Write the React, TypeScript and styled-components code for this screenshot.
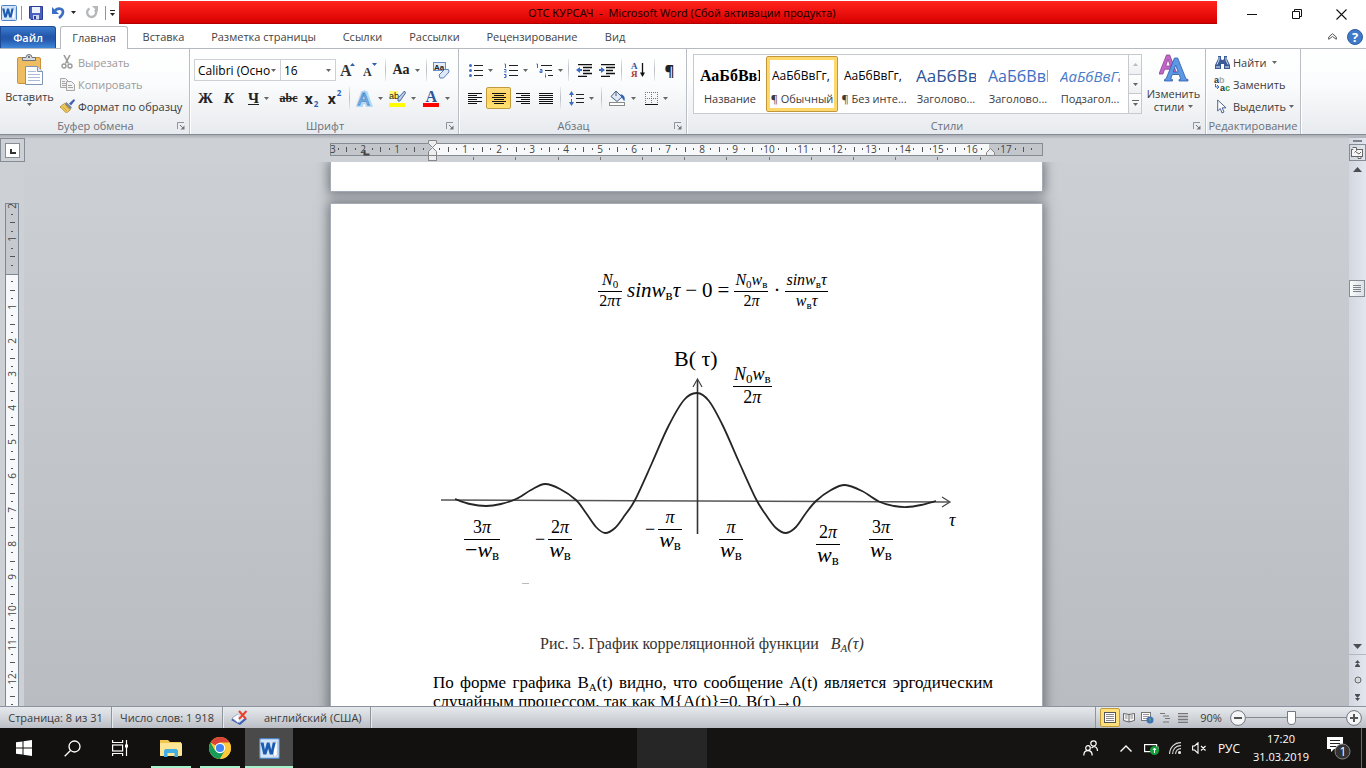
import React from 'react';
import styled, { createGlobalStyle, css } from 'styled-components';

const uiFont = '"Open Sans", "Noto Sans", sans-serif';
const serif = '"Liberation Serif", serif';

const GlobalStyle = createGlobalStyle`
  *, *::before, *::after { box-sizing: border-box; }
  body { margin: 0; font-family: ${uiFont}; font-size: 11px; color: #3b3b3b; overflow: hidden; }
  button, select, input { font: inherit; color: inherit; margin: 0; }
  button { border: 0; padding: 0; background: none; cursor: default; white-space: nowrap; }
  svg { display: block; flex: none; }
`;

/* ---------- window frame ---------- */

const Shell = styled.div`
  display: flex;
  flex-direction: column;
  height: 100vh;
`;

const TitleBar = styled.header`
  display: flex;
  height: 25px;
  background: #fff;
`;

const QuickAccess = styled.div`
  display: flex;
  align-items: center;
  width: 119px;
  padding-left: 1px;
  gap: 4px;
`;

const QuickButton = styled.button<{ $w?: number }>`
  display: flex;
  align-items: center;
  justify-content: center;
  width: ${p => p.$w ?? 16}px;
  height: 22px;
`;

const QuickRule = styled.span`
  width: 1px;
  height: 14px;
  background: #8f959c;
`;

const Caption = styled.h1`
  flex: 1;
  margin: 1px 0;
  padding-left: 28px;
  font-family: "Noto Sans", sans-serif;
  font-size: 11px;
  line-height: 23px;
  font-weight: 400;
  text-align: center;
  white-space: pre;
  color: #1c0000;
  background: linear-gradient(#ff261e, #f01410 45%, #d60000);
  border-bottom: 1px solid #b00000;
`;

const WindowButtons = styled.div`
  display: flex;
  justify-content: flex-end;
  width: 149px;
  padding: 3px 2px 0 0;
`;

const WindowButton = styled.button`
  display: flex;
  align-items: center;
  justify-content: center;
  width: 45px;
`;

/* ---------- tabs ---------- */

const TabRow = styled.nav`
  display: flex;
  align-items: stretch;
  height: 23px;
  background: #fff;
`;

const Tab = styled.button<{ $w: number; $active?: boolean }>`
  width: ${p => p.$w}px;
  margin-top: 1px;
  line-height: 22px;
  color: #444;
  ${p =>
    p.$active &&
    css`
      position: relative;
      margin-right: 1px;
      margin-bottom: -1px;
      border: 1px solid #b6babf;
      border-bottom: 0;
      border-radius: 3px 3px 0 0;
      background: #fff;
      line-height: 20px;
      z-index: 1;
    `}
`;

const FileTab = styled.button`
  width: 56px;
  margin: 1px 4px 0 0;
  line-height: 20px;
  color: #fff;
  font-weight: 600;
  border: 1px solid #1d4a93;
  border-bottom: 0;
  border-radius: 0 3px 0 0;
  background: linear-gradient(#3b7dd0, #2357aa 45%, #2459ad 60%, #3f86d8);
`;

const TabTools = styled.div`
  display: flex;
  align-items: center;
  gap: 10px;
  margin-left: auto;
  padding-right: 3px;
`;

/* ---------- ribbon ---------- */

const Ribbon = styled.section`
  display: flex;
  height: 87px;
  border-top: 1px solid #b6babf;
  border-bottom: 1px solid #858b93;
  background: linear-gradient(#fff, #fbfcfd 40%, #e7eaee);
`;

const Group = styled.section<{ $w: number }>`
  display: flex;
  flex-direction: column;
  width: ${p => p.$w}px;
  border-right: 1px solid #b9bec5;
  box-shadow: 1px 0 0 #fff;
`;

const GroupBody = styled.div`
  display: flex;
  flex: 1;
`;

const GroupFooter = styled.footer<{ $tight?: boolean }>`
  display: flex;
  align-items: center;
  height: 17px;
  padding: ${p => (p.$tight ? '0' : '0 4px 0 14px')};
  color: #6b7078;
`;

const GroupName = styled.span`
  flex: 1;
  text-align: center;
  white-space: nowrap;
`;

const BigButton = styled.button<{ $w: number }>`
  display: flex;
  flex: none;
  flex-direction: column;
  align-items: center;
  width: ${p => p.$w}px;
  padding-top: 5px;
  line-height: 13px;
`;

const BigLabel = styled.span`
  display: flex;
  align-items: center;
  gap: 4px;
  margin-top: 5px;
  & + & { margin-top: 0; }
`;

const CommandList = styled.div<{ $pad: number }>`
  display: flex;
  flex-direction: column;
  padding: 2px 0 0 ${p => p.$pad}px;
`;

const Command = styled.button<{ $off?: boolean }>`
  display: flex;
  align-items: center;
  gap: 3px;
  height: 22px;
  color: ${p => (p.$off ? '#9a9a9a' : '#3b3b3b')};
`;

const CommandIcon = styled.span`
  display: flex;
  width: 16px;
  justify-content: center;
`;

const ToolRows = styled.div`
  display: flex;
  flex-direction: column;
  gap: 6px;
  padding: 10px 0 0 4px;
`;

const ToolRow = styled.div`
  display: flex;
  align-items: center;
  height: 22px;
`;

const Tool = styled.button<{ $w?: number; $on?: boolean }>`
  display: flex;
  align-items: center;
  justify-content: center;
  gap: 5px;
  width: ${p => p.$w ?? 23}px;
  height: 22px;
  ${p =>
    p.$on &&
    css`
      border: 1px solid #c29b3d;
      border-radius: 2px;
      background: linear-gradient(#fddc7e, #ffd15c 50%, #ffe375);
    `}
`;

const Rule = styled.span`
  width: 1px;
  height: 22px;
  margin: 0 3px;
  background: linear-gradient(#e8eaed, #b9bec5, #e8eaed);
`;

const Letter = styled.span<{ $size?: number; $italic?: boolean; $line?: string; $sans?: boolean }>`
  font-family: ${p => (p.$sans ? uiFont : serif)};
  font-weight: 700;
  font-size: ${p => p.$size ?? 15}px;
  font-style: ${p => (p.$italic ? 'italic' : 'normal')};
  text-decoration: ${p => p.$line ?? 'none'};
  color: #222;
`;

const Power = styled.span<{ $up?: boolean }>`
  align-self: ${p => (p.$up ? 'flex-start' : 'flex-end')};
  margin-left: -4px;
  font-size: 8px;
  font-weight: 700;
  color: #2b5fb5;
`;

const Combo = styled.label<{ $w: number }>`
  display: flex;
  align-items: center;
  width: ${p => p.$w}px;
  height: 22px;
  padding-right: 4px;
  border: 1px solid #cdd1d6;
  background: #fff;
  & + & { border-left: 0; }
`;

const ComboField = styled.select`
  flex: 1;
  min-width: 0;
  appearance: none;
  border: 0;
  padding: 0 0 0 3px;
  background: none;
  color: #000;
  font-size: 12px;
`;

/* ---------- style gallery ---------- */

const Gallery = styled.div`
  display: flex;
  flex: 1;
  height: 60px;
  margin: 5px 0 0 6px;
  border: 1px solid #c6cacf;
  background: #fff;
`;

const StyleCard = styled.button<{ $on?: boolean }>`
  display: flex;
  flex-direction: column;
  align-items: center;
  justify-content: space-between;
  width: 72px;
  height: 56px;
  margin-top: 1px;
  padding: 8px 3px 4px;
  border: ${p => (p.$on ? '1px solid #c0973a' : '1px solid transparent')};
  border-radius: 2px;
  box-shadow: ${p => (p.$on ? 'inset 0 0 0 3px #ffd86b' : 'none')};
`;

const Sample = styled.span<{ $size: number; $color: string; $serif?: boolean; $italic?: boolean }>`
  width: 60px;
  height: 22px;
  overflow: hidden;
  text-align: left;
  line-height: 22px;
  font-family: ${p => (p.$serif ? serif : uiFont)};
  font-weight: ${p => (p.$serif ? 700 : 400)};
  font-style: ${p => (p.$italic ? 'italic' : 'normal')};
  font-size: ${p => p.$size}px;
  color: ${p => p.$color};
`;

const StyleName = styled.span`
  line-height: 16px;
`;

const GalleryScroll = styled.div`
  display: flex;
  flex-direction: column;
  width: 14px;
  margin: -1px -1px -1px auto;
`;

const GalleryStep = styled.button`
  display: flex;
  flex: 1;
  align-items: center;
  justify-content: center;
  border: 1px solid #c6cacf;
  background: linear-gradient(#fff, #eef0f3);
  & + & { border-top: 0; }
`;

/* ---------- workspace ---------- */

const Workspace = styled.main`
  display: grid;
  grid-template-columns: 24px minmax(0, 1fr) 17px;
  grid-template-rows: 27px minmax(0, 1fr);
  flex: 1;
  min-height: 0;
  background: linear-gradient(#cdd1d6, #c4c8cc 45%, #b9bcc0);
`;

const TabSelectorCell = styled.div`
  z-index: 1;
  padding-top: 3px;
  background: linear-gradient(#a8acb2, #cdd1d6 4px);
`;

const TabSelector = styled.button`
  display: flex;
  align-items: center;
  justify-content: center;
  width: 25px;
  height: 24px;
  border: 1px solid #868c94;
  background: #cdd1d6;
`;

const RulerCell = styled.div`
  display: flex;
  justify-content: center;
  padding-top: 3px;
  background: linear-gradient(#a8acb2, #cdd1d6 4px);
`;

const SideRuler = styled.div`
  overflow: hidden;
  background: #cdd1d6;
`;

const Viewport = styled.div`
  display: flex;
  flex-direction: column;
  align-items: center;
  gap: 11px;
  overflow: hidden;
`;

const Sheet = styled.article<{ $tail?: boolean }>`
  flex: none;
  width: 713px;
  height: ${p => (p.$tail ? 30 : 1006)}px;
  padding: ${p => (p.$tail ? '0' : '62px 49px 0 102px')};
  border: 1px solid #a6adb6;
  border-top-width: ${p => (p.$tail ? 0 : 1)}px;
  background: #fff;
  box-shadow: 0 0 11px 2px rgba(60, 64, 70, 0.6);
  font-family: ${serif};
  color: #000;
`;

const Equation = styled.div`
  display: flex;
  align-items: center;
  justify-content: center;
  height: 48px;
  gap: 5px;
  font-size: 21px;
  line-height: 20px;
`;

const Fraction = styled.span<{ $lh: number }>`
  display: inline-flex;
  flex-direction: column;
  align-items: center;
  line-height: ${p => p.$lh}px;
`;

const Numerator = styled.span<{ $size: number }>`
  padding: 0 1px 2px;
  font-size: ${p => p.$size}px;
`;

const Denominator = styled.span<{ $size: number }>`
  align-self: stretch;
  padding: 0 1px;
  text-align: center;
  border-top: 1px solid #000;
  font-size: ${p => p.$size}px;
`;

const Index = styled.sub<{ $size: number }>`
  font-size: ${p => p.$size}px;
  line-height: 0;
  vertical-align: -3px;
`;

const Figure = styled.figure`
  position: relative;
  margin: 26px 0 0;
  height: 260px;
`;

const Mark = styled.span<{ $x: number; $y: number; $size?: number }>`
  position: absolute;
  left: ${p => p.$x}px;
  top: ${p => p.$y}px;
  display: flex;
  align-items: center;
  gap: 3px;
  font-size: ${p => p.$size ?? 18}px;
  line-height: 20px;
  white-space: nowrap;
`;

const FigureTitle = styled.p`
  margin: 34px 0 0;
  padding-left: 107px;
  line-height: 20px;
  font-size: 16px;
  color: #333;
  white-space: pre;
`;

const BodyText = styled.p`
  margin: 19px 0 0;
  font-size: 17px;
  line-height: 19px;
  text-align: justify;
`;

/* ---------- vertical scroll bar ---------- */

const ScrollColumn = styled.aside`
  grid-column: 3;
  grid-row: 1 / 3;
  display: flex;
  flex-direction: column;
  align-items: stretch;
  border-top: 3px solid #b4b8be;
  background: linear-gradient(90deg, #d3d8e0, #e2e7ef);
`;

const ScrollButton = styled.button<{ $h: number; $framed?: boolean; $ruled?: boolean }>`
  display: flex;
  align-items: center;
  justify-content: center;
  height: ${p => p.$h}px;
  border: ${p => (p.$framed ? '1px solid #868c94' : '0')};
  ${p => p.$ruled && 'border-top: 1px solid #b3b8c0;'}
`;

const Track = styled.div`
  flex: 1;
  padding-top: 102px;
`;

const Thumb = styled.div`
  display: flex;
  align-items: center;
  justify-content: center;
  width: 16px;
  height: 17px;
  border: 1px solid #868c94;
  background: linear-gradient(90deg, #fafbfc, #dcdfe4);
`;

/* ---------- status bar ---------- */

const StatusBar = styled.footer`
  display: flex;
  align-items: stretch;
  height: 22px;
  border-top: 1px solid #8b93a0;
  background: linear-gradient(#e6e9ec, #d2d5da 50%, #bbbfc5);
`;

const StatusItem = styled.button<{ $w: number }>`
  display: flex;
  align-items: center;
  justify-content: center;
  width: ${p => p.$w}px;
  border-right: 1px solid #8f959d;
  box-shadow: 1px 0 0 #e8eaed;
`;

const StatusGroup = styled.div`
  display: flex;
  align-items: center;
  width: 148px;
  gap: 16px;
  padding-left: 8px;
  border-right: 1px solid #8f959d;
  box-shadow: 1px 0 0 #e8eaed;
`;

const StatusRight = styled.div`
  display: flex;
  align-items: center;
  margin-left: auto;
  padding: 0 4px 0 4px;
  border-left: 1px solid #8f959d;
`;

const ViewButton = styled.button<{ $on?: boolean }>`
  display: flex;
  align-items: center;
  justify-content: center;
  width: 18px;
  height: 19px;
  ${p =>
    p.$on &&
    css`
      width: 20px;
      border: 1px solid #c29b3d;
      border-radius: 2px;
      background: #ffe07a;
    `}
`;

const ZoomValue = styled.button`
  width: 38px;
  text-align: center;
`;

const RoundButton = styled.button`
  display: flex;
  width: 16px;
  height: 16px;
`;

const ZoomSlider = styled.input`
  width: 100px;
  height: 18px;
  appearance: none;
  background: linear-gradient(#858b93, #858b93) center / 100% 1px no-repeat;
  &::-webkit-slider-thumb {
    appearance: none;
    width: 9px;
    height: 14px;
    border: 1px solid #747a82;
    border-radius: 1px 1px 5px 5px;
    background: #fff;
  }
`;

/* ---------- task bar ---------- */

const TaskBar = styled.footer`
  display: flex;
  height: 40px;
  color: #fff;
  background: linear-gradient(90deg, #12110f 0 637px, #262626 637px 707px, #151412 707px);
`;

const TaskButton = styled.button<{ $running?: boolean; $active?: boolean }>`
  display: flex;
  align-items: center;
  justify-content: center;
  width: ${p => (p.$active ? 48 : p.$running ? 40 : 48)}px;
  margin-left: ${p => (p.$active ? 5 : p.$running ? 9 : 0)}px;
  padding-top: ${p => (p.$running ? 2 : 0)}px;
  border-bottom: ${p => (p.$running ? '2px solid #a6f3cb' : '0')};
  background: ${p => (p.$active ? '#4a4a4a' : 'none')};
  &:nth-child(4) { margin-left: 7px; }
`;

const Tray = styled.div`
  display: flex;
  align-items: center;
  margin-left: auto;
`;

const TrayItem = styled.button<{ $w: number }>`
  display: flex;
  align-items: center;
  justify-content: center;
  width: ${p => p.$w}px;
  height: 40px;
  font-size: 12px;
`;

const Clock = styled.time`
  width: 68px;
  text-align: center;
  line-height: 18px;
`;

const ShowDesktop = styled.button`
  width: 5px;
  height: 40px;
  border-left: 1px solid #6a6a6a;
`;

/* ---------- drawings ---------- */

const Arrow = ({ color = '#666' }: { color?: string }) => (
  <svg width="5" height="3" viewBox="0 0 5 3"><path d="M0 0h5L2.500 3z" fill={color} /></svg>
);

const WordLogo = ({ size }: { size: number }) => (
  <svg width={size} height={size} viewBox="0 0 16 16">
    <rect x=".5" y=".5" width="15" height="15" rx="1" fill="#d3e5f8" stroke="#4a82c4" />
    <path d="M11 3h3v10l-3 2z" fill="#fff" stroke="#9ab8de" strokeWidth=".5" />
    <path d="M1.200 3.500h2.300l1 5.500 1.500-5.500h2l1.300 5.500 1.200-5.500h2.300L10.500 12.500H8.200L7 8 5.600 12.500H3.300z" fill="#1d5bb0" />
  </svg>
);

const SaveIcon = () => (
  <svg width="14" height="14" viewBox="0 0 14 14">
    <path d="M.5.5h13v13H2L.5 12z" fill="#4a5fc0" stroke="#2c3b94" />
    <rect x="3" y="1" width="8" height="6" fill="#eef3fb" />
    <rect x="4" y="9" width="6" height="4.500" fill="#cdd6ee" />
    <rect x="5" y="10" width="2" height="3" fill="#2c3b94" />
  </svg>
);

const UndoIcon = () => (
  <svg width="13" height="13" viewBox="0 0 13 13">
    <path d="M3 4.500C6 1.500 11 2.200 11 6c0 3-2 4.500-4 6" fill="none" stroke="#3c6fc4" strokeWidth="2.600" />
    <path d="M0 1v7h7z" fill="#3c6fc4" />
  </svg>
);

const RedoIcon = () => (
  <svg width="13" height="13" viewBox="0 0 13 13">
    <path d="M4.500 2.500A4.500 4.500 0 1 0 10 3.500" fill="none" stroke="#b5b8bb" strokeWidth="2.400" />
    <path d="M7 0h6v6z" fill="#b5b8bb" />
  </svg>
);

const PasteIcon = () => (
  <svg width="26" height="31" viewBox="0 0 26 31">
    <rect x=".5" y="3.500" width="23" height="26" rx="1.500" fill="#eebd62" stroke="#c9923a" />
    <path d="M5.500 6.500V3.500H9a3 3 0 0 1 6 0h3.500v3z" fill="#d8dade" stroke="#6f747a" />
    <circle cx="12" cy="3" r="1" fill="#555" />
    <path d="M8.500 12.500h12l5 5v13h-17z" fill="#fff" stroke="#7f95b8" />
    <path d="M20.500 12.500v5h5" fill="#dce6f5" stroke="#7f95b8" />
    <path d="M11 17.500h8M11 20.500h12M11 23.500h12M11 26.500h12" stroke="#a9bbd6" />
  </svg>
);

const CutIcon = () => (
  <svg width="12" height="14" viewBox="0 0 12 14" fill="none" stroke="#9a9a9a">
    <path d="M3 0l4.500 8.500M9 0L4.500 8.500" strokeWidth="1.600" />
    <circle cx="3" cy="11" r="2" strokeWidth="1.400" />
    <circle cx="9" cy="11" r="2" strokeWidth="1.400" />
  </svg>
);

const CopyIcon = () => (
  <svg width="15" height="13" viewBox="0 0 15 13" fill="#f2f2f2" stroke="#a5a5a5">
    <path d="M.5.5h5l3 3v6h-8z" /><path d="M2 3.500h3M2 5.500h4M2 7.500h4" />
    <path d="M6.500 3.500h5l3 3v6h-8z" /><path d="M8 7.500h4M8 9.500h5" />
  </svg>
);

const BrushIcon = () => (
  <svg width="15" height="14" viewBox="0 0 15 14">
    <path d="M14 0L9 4.500 11 6.500 15 1.500z" fill="#3f5fb0" />
    <path d="M6.500 3L12 8.500 10 10.500 4.500 5z" fill="#7c8aa0" />
    <path d="M4.500 4.500L10.500 10.500 6.500 14C4 12 2 9.500 0 8z" fill="#f0cb62" stroke="#a87d20" strokeWidth=".8" />
    <path d="M3 8l4 4M5 6.500l4 4" stroke="#b98d2c" strokeWidth=".7" />
  </svg>
);

const GrowFont = ({ down }: { down?: boolean }) => (
  <svg width="15" height="16" viewBox="0 0 15 16">
    <text x="0" y="14" fontFamily="Liberation Serif" fontWeight="700" fontSize={down ? 12 : 16} fill="#333">A</text>
    <path d={down ? 'M9 1h5l-2.500 3z' : 'M10 4h5l-2.500-3z'} fill="#2f5fae" />
  </svg>
);

const ClearFormat = () => (
  <svg width="17" height="17" viewBox="0 0 17 17">
    <rect x=".5" y=".5" width="12" height="8" fill="#e5edf8" stroke="#6c8fc8" />
    <text x="1" y="7.500" fontFamily="Liberation Sans" fontWeight="700" fontSize="8" fill="#222">Aa</text>
    <path d="M6 13L11.500 7.500h4L16 10l-5.500 6H7z" fill="#dfe8f6" stroke="#5d7fb8" />
  </svg>
);

const TextEffect = () => (
  <svg width="17" height="17" viewBox="0 0 17 17">
    <text x="2" y="14.500" fontFamily="Liberation Sans" fontWeight="700" fontSize="17" fill="#fff" stroke="#b3d8f5" strokeWidth="4">A</text>
    <text x="2" y="14.500" fontFamily="Liberation Sans" fontSize="17" fill="#fff" stroke="#4b8fd0" strokeWidth="1">A</text>
  </svg>
);

const Highlighter = () => (
  <svg width="17" height="17" viewBox="0 0 17 17">
    <rect x="0" y="1" width="9" height="8" fill="#ffff6a" />
    <text x="0" y="9" fontFamily="Liberation Sans" fontSize="9" fill="#222">ab</text>
    <path d="M15.500 1L9 8v3h2L16.500 3z" fill="#b9cdea" stroke="#3d5b8f" strokeWidth=".9" />
    <rect x="0" y="13" width="16" height="4" fill="#ff0" />
  </svg>
);

const FontColour = () => (
  <svg width="17" height="17" viewBox="0 0 17 17">
    <text x="2.500" y="11.500" fontFamily="Liberation Serif" fontWeight="700" fontSize="16" fill="#2b559f">A</text>
    <rect x="0" y="13" width="16" height="4" fill="#f00" />
  </svg>
);

const Bullets = () => (
  <svg width="14" height="13" viewBox="0 0 14 13">
    <path d="M5 1.500h9M5 6.500h9M5 11.500h9" stroke="#222" />
    <g fill="#3b6cc0"><circle cx="1.500" cy="1.500" r="1.500" /><circle cx="1.500" cy="6.500" r="1.500" /><circle cx="1.500" cy="11.500" r="1.500" /></g>
  </svg>
);

const Numbering = () => (
  <svg width="14" height="15" viewBox="0 0 14 15">
    <path d="M5 2.500h9M5 7.500h9M5 12.500h9" stroke="#222" />
    <path d="M.5 1h1v4M0 6.500h2v1L.5 9h2M0 11.500h2v1.500h-1M2 13v1.500H0" fill="none" stroke="#3b6cc0" />
  </svg>
);

const Multilevel = () => (
  <svg width="17" height="15" viewBox="0 0 17 15">
    <path d="M5 2.500h11M9 7.500h7M12 12.500h5" stroke="#222" strokeWidth="1.200" />
    <path d="M.5 1h1v4M4 6.500h2v3h-2v-1.500h2M9.500 10.500v1M9.500 12v2.500" fill="none" stroke="#3b6cc0" />
  </svg>
);

const Indent = ({ out }: { out?: boolean }) => (
  <svg width="16" height="13" viewBox="0 0 16 13">
    <path d="M2 .5h14M7 3.500h9M7 6.500h7M7 9.500h9M2 12.500h9" stroke="#111" strokeWidth="1.400" />
    <path d={out ? 'M0 6L4 3v2h2v2H4v2z' : 'M6 6L2 3v2H0v2h2v2z'} fill="#3b6cc0" />
  </svg>
);

const SortIcon = () => (
  <svg width="14" height="16" viewBox="0 0 14 16">
    <text x="0" y="7" fontFamily="Liberation Serif" fontWeight="700" fontSize="9" fill="#2b559f">А</text>
    <text x="0" y="15" fontFamily="Liberation Serif" fontWeight="700" fontSize="9" fill="#a33">Я</text>
    <path d="M11.500 1v11" stroke="#111" strokeWidth="1.300" /><path d="M9 10.500h5l-2.500 4.500z" fill="#111" />
  </svg>
);

const alignments: Record<string, string> = {
  left: 'M0 .5h14M0 2.500h9M0 4.500h14M0 6.500h9M0 8.500h14M0 10.500h9',
  center: 'M0 .5h14M2 2.500h10M0 4.500h14M2 6.500h10M0 8.500h14M2 10.500h10',
  right: 'M0 .5h14M5 2.500h9M0 4.500h14M5 6.500h9M0 8.500h14M5 10.500h9',
  full: 'M0 .5h14M0 2.500h14M0 4.500h14M0 6.500h14M0 8.500h14M0 10.500h14',
};

const AlignIcon = ({ kind }: { kind: string }) => (
  <svg width="14" height="11" viewBox="0 0 14 11"><path d={alignments[kind]} stroke="#111" /></svg>
);

const Spacing = () => (
  <svg width="15" height="15" viewBox="0 0 15 15">
    <path d="M7 3.500h8M7 7.500h8M7 11.500h8" stroke="#222" />
    <path d="M2.500 3v9" stroke="#3b6cc0" strokeDasharray="3 2" />
    <path d="M0 4h5L2.500 0zM0 11h5L2.500 15z" fill="#3b6cc0" />
  </svg>
);

const Bucket = () => (
  <svg width="17" height="16" viewBox="0 0 17 16">
    <path d="M7 1l6 6-5 4.500L2 6.500z" fill="#dfe8f5" stroke="#4c5f80" />
    <path d="M7 1v5" stroke="#4c5f80" />
    <path d="M11.500 4C15 5 16.500 7.500 15.500 11c-1.500-1-2-2.500-3-4z" fill="#2f65b8" />
    <rect x=".5" y="12.500" width="15" height="3" fill="#fff" stroke="#8a8a8a" />
  </svg>
);

const Borders = () => (
  <svg width="13" height="13" viewBox="0 0 13 13">
    <path d="M0 .5h13M0 6.500h13M.5 0v13M6.500 0v13M12.500 0v13" stroke="#777" strokeDasharray="1 1" />
    <path d="M0 12.500h13" stroke="#111" />
  </svg>
);

const Launcher = () => (
  <svg width="8" height="8" viewBox="0 0 8 8">
    <path d="M.5 7V.5H7" fill="none" stroke="#8e949b" />
    <path d="M3 3l3 3" stroke="#777" /><path d="M7.500 3.500v4h-4z" fill="#777" />
  </svg>
);

const ChangeStyles = () => (
  <svg width="30" height="28" viewBox="0 0 30 28">
    <path d="M0 20L7.500 1h3.200L18 20h-4l-1.700-4.800H5.600L3.900 20zM6.700 12h4.600L9 5.300z" fill="#c468c8" stroke="#8c3b96" strokeWidth=".8" />
    <path d="M5.500 27v-1.500l1.500-.5L15.500 4h3.200L27 25l2 .5V27h-9v-1.500l1.800-.5-1.700-4.500h-6.800L11.700 25l1.800.5V27zM14.200 18h5l-2.500-6.800z" fill="#5c98e4" stroke="#2d5ca8" strokeWidth=".8" />
  </svg>
);

const Binoculars = () => (
  <svg width="15" height="13" viewBox="0 0 15 13">
    <path d="M3 0h3v3l1 1h1l1-1V0h3v3l3 6v4H9V8H6v5H0V9l3-6z" fill="#3a5a98" />
    <path d="M4 1v3L2 8.500M11 1v3l2 4.500" fill="none" stroke="#cbdaf2" />
    <path d="M1 11h4M10 11h4" stroke="#e5edf9" />
  </svg>
);

const ReplaceIcon = () => (
  <svg width="17" height="15" viewBox="0 0 17 15">
    <text x="0" y="6" fontFamily="Liberation Sans" fontWeight="700" fontSize="9" fill="#333">a<tspan fill="#aaa">b</tspan></text>
    <text x="6" y="14" fontFamily="Liberation Sans" fontWeight="700" fontSize="9" fill="#333">a<tspan fill="#2c9a3a">c</tspan></text>
    <path d="M1.500 7v3h3M3 8l2 2-2 2" fill="none" stroke="#3b6cc0" />
  </svg>
);

const CursorIcon = () => (
  <svg width="10" height="15" viewBox="0 0 10 15">
    <path d="M.7 1v11l2.600-2.500L5 14l2-1-1.800-4.200H9z" fill="#fff" stroke="#4a6494" />
  </svg>
);

/* ---------- rulers ---------- */

const UNIT = 33.83;

const HorizontalRuler = () => {
  const zero = 432;
  const marks = Array.from({ length: 84 }, (_, i) => i - 12)
    .map(i => ({ i, x: Math.round(zero + (i * UNIT) / 4) }))
    .filter(m => m.x > 334 && m.x < 1040 && m.i !== 0 && Math.abs(m.x - 990) > 6);
  const stops = Array.from({ length: 13 }, (_, i) => Math.round(432 + (i + 1) * 42.200));
  return (
    <svg width="713" height="24" viewBox="331 138 713 24">
      <rect x="331.500" y="143.500" width="712" height="12" fill="#c3c7cc" stroke="#868c94" />
      <rect x="432" y="144" width="558" height="11" fill="#f7f8fa" />
      {marks.map(({ i, x }) =>
        i % 4 === 0 ? (
          <text key={i} x={x} y="153" textAnchor="middle" fontSize="10" fontFamily="Open Sans" fill="#444">{Math.abs(i / 4)}</text>
        ) : i % 2 === 0 ? (
          <rect key={i} x={x} y="147" width="1" height="5" fill="#555" />
        ) : (
          <rect key={i} x={x} y="148" width="1" height="2" fill="#555" />
        ),
      )}
      <text x="331" y="153" fontSize="10" fontFamily="Open Sans" fill="#444">3</text>
      {stops.map(x => <rect key={x} x={x} y="157" width="1" height="3" fill="#777" />)}
      <path d="M365.500 150v4.500h5" fill="none" stroke="#444" strokeWidth="2" />
      <path d="M429.500 140.500h8v3l-4 4-4-4zM433.500 147.500l4 4v4h-8v-4z" fill="#eceef0" stroke="#868686" />
      <rect x="429.500" y="155.500" width="8" height="5" fill="#eceef0" stroke="#868686" />
      <path d="M991.500 148.500l4 4v3h-8v-3z" fill="#eceef0" stroke="#868686" />
    </svg>
  );
};

const VerticalRuler = () => {
  const zero = 274;
  const marks = Array.from({ length: 112 }, (_, i) => i - 7).map(i => ({ i, y: Math.round(zero - 1 + (i * UNIT) / 4) }));
  return (
    <svg width="24" height="1000" viewBox="0 162 24 1000">
      <rect x="5.500" y="203.500" width="13" height="940" fill="#f7f8fa" stroke="#7c8896" />
      <rect x="6" y="204" width="12" height="70" fill="#c6cacf" />
      <rect x="5" y="274" width="14" height="1" fill="#7c8896" />
      {[{ i: -8, y: 206 }, ...marks].map(({ i, y }) =>
        i === 0 ? null : i % 4 === 0 ? (
          <text key={i} transform={`translate(16 ${y}) rotate(-90)`} textAnchor="middle" fontSize="10" fontFamily="Open Sans" fill="#444">{Math.abs(i / 4)}</text>
        ) : i % 2 === 0 ? (
          <rect key={i} x="10" y={y} width="5" height="1" fill="#555" />
        ) : (
          <rect key={i} x="11" y={y} width="2" height="1" fill="#555" />
        ),
      )}
    </svg>
  );
};

/* ---------- correlation plot ---------- */

const samples: [number, number][] = [
  [455, 499], [470, 504], [486, 506], [501, 504], [516, 499], [531, 490], [545, 484], [560, 489], [576, 500], [586, 513],
  [596, 527], [605, 533], [615, 528], [625, 515], [635, 500], [652, 463], [668, 427], [684, 400], [697, 393], [709, 401],
  [723, 426], [739, 462], [756, 499], [766, 515], [776, 528], [786, 533], [796, 527], [806, 513], [816, 501], [831, 490],
  [845, 485], [862, 491], [880, 502], [894, 506], [907, 507], [921, 505], [936, 501],
];

const smoothPath = (pts: [number, number][]) => {
  let d = `M${pts[0].join(' ')}`;
  for (let i = 0; i < pts.length - 1; i++) {
    const a = pts[i - 1] ?? pts[i];
    const b = pts[i];
    const c = pts[i + 1];
    const e = pts[i + 2] ?? c;
    d += `C${b[0] + (c[0] - a[0]) / 6} ${b[1] + (c[1] - a[1]) / 6} ${c[0] - (e[0] - b[0]) / 6} ${c[1] - (e[1] - b[1]) / 6} ${c[0]} ${c[1]}`;
  }
  return d;
};

const Plot = () => (
  <svg width="559" height="260" viewBox="433 340 559 260" fill="none">
    <path d="M441 500L949 502" stroke="#555" strokeWidth="1.300" />
    <path d="M942 497l8 5-8 5" stroke="#444" strokeWidth="1.200" />
    <path d="M697.500 534V380" stroke="#333" strokeWidth="1.600" />
    <path d="M693 387l4.500-8 4.500 8" stroke="#444" strokeWidth="1.200" />
    <path d={smoothPath(samples)} stroke="#252525" strokeWidth="1.800" />
    <path d="M522 583.500h7" stroke="#bbb" />
  </svg>
);

const OverW = ({ top, minus }: { top: string; minus?: boolean }) => (
  <Fraction $lh={20}>
    <Numerator $size={18}>{top.replace('π', '')}<i>π</i></Numerator>
    <Denominator $size={22}>{minus && '−'}<i>w</i><Index $size={15}>в</Index></Denominator>
  </Fraction>
);

/* ---------- page sections ---------- */

const tabs = [
  { name: 'Главная', w: 68 }, { name: 'Вставка', w: 69 }, { name: 'Разметка страницы', w: 131 }, { name: 'Ссылки', w: 67 },
  { name: 'Рассылки', w: 77 }, { name: 'Рецензирование', w: 118 }, { name: 'Вид', w: 48 },
];

const styleCards = [
  { name: 'Название', size: 16, color: '#000', serif: true },
  { name: '¶ Обычный', size: 12, color: '#000', on: true },
  { name: '¶ Без инте...', size: 12, color: '#000' },
  { name: 'Заголово...', size: 17, color: '#2f5496' },
  { name: 'Заголово...', size: 16, color: '#3d6fc4' },
  { name: 'Подзагол...', size: 15, color: '#4a7bc8', italic: true },
];

const Footer = ({ name }: { name: string }) => (
  <GroupFooter>
    <GroupName>{name}</GroupName>
    <button aria-label={`${name}: параметры`}><Launcher /></button>
  </GroupFooter>
);

const RibbonBar = () => (
  <Ribbon>
    <Group $w={190}>
      <GroupBody>
        <BigButton $w={59}>
          <PasteIcon />
          <BigLabel>Вставить</BigLabel>
          <Arrow />
        </BigButton>
        <CommandList $pad={0}>
          <Command $off><CommandIcon><CutIcon /></CommandIcon>Вырезать</Command>
          <Command $off><CommandIcon><CopyIcon /></CommandIcon>Копировать</Command>
          <Command><CommandIcon><BrushIcon /></CommandIcon>Формат по образцу</Command>
        </CommandList>
      </GroupBody>
      <Footer name="Буфер обмена" />
    </Group>

    <Group $w={269}>
      <GroupBody>
        <ToolRows>
          <ToolRow>
            <Combo $w={87}><ComboField aria-label="Шрифт"><option>Calibri (Осно</option></ComboField><Arrow /></Combo>
            <Combo $w={55}><ComboField aria-label="Размер"><option>16</option></ComboField><Arrow /></Combo>
            <Tool aria-label="Увеличить"><GrowFont /></Tool>
            <Tool aria-label="Уменьшить"><GrowFont down /></Tool>
            <Rule />
            <Tool $w={34}><Letter $size={14}>Aa</Letter><Arrow /></Tool>
            <Rule />
            <Tool aria-label="Очистить формат"><ClearFormat /></Tool>
          </ToolRow>
          <ToolRow>
            <Tool><Letter>Ж</Letter></Tool>
            <Tool><Letter $italic>К</Letter></Tool>
            <Tool $w={37}><Letter $line="underline">Ч</Letter><Arrow /></Tool>
            <Tool><Letter $size={12} $line="line-through">abc</Letter></Tool>
            <Tool><Letter $sans $size={14}>x</Letter><Power>2</Power></Tool>
            <Tool><Letter $sans $size={14}>x</Letter><Power $up>2</Power></Tool>
            <Rule />
            <Tool $w={32} aria-label="Эффекты"><TextEffect /><Arrow /></Tool>
            <Tool $w={34} aria-label="Выделение"><Highlighter /><Arrow /></Tool>
            <Tool $w={34} aria-label="Цвет текста"><FontColour /><Arrow /></Tool>
          </ToolRow>
        </ToolRows>
      </GroupBody>
      <Footer name="Шрифт" />
    </Group>

    <Group $w={228}>
      <GroupBody>
        <ToolRows>
          <ToolRow>
            <Tool $w={35} aria-label="Маркеры"><Bullets /><Arrow /></Tool>
            <Tool $w={35} aria-label="Нумерация"><Numbering /><Arrow /></Tool>
            <Tool $w={32} aria-label="Многоуровневый список"><Multilevel /><Arrow /></Tool>
            <Rule />
            <Tool aria-label="Уменьшить отступ"><Indent out /></Tool>
            <Tool aria-label="Увеличить отступ"><Indent /></Tool>
            <Rule />
            <Tool $w={26} aria-label="Сортировка"><SortIcon /></Tool>
            <Rule />
            <Tool><Letter $size={15} $sans>¶</Letter></Tool>
          </ToolRow>
          <ToolRow>
            <Tool aria-label="По левому краю"><AlignIcon kind="left" /></Tool>
            <Tool $w={25} $on aria-label="По центру"><AlignIcon kind="center" /></Tool>
            <Tool aria-label="По правому краю"><AlignIcon kind="right" /></Tool>
            <Tool aria-label="По ширине"><AlignIcon kind="full" /></Tool>
            <Rule />
            <Tool $w={34} aria-label="Интервал"><Spacing /><Arrow /></Tool>
            <Rule />
            <Tool $w={34} aria-label="Заливка"><Bucket /><Arrow /></Tool>
            <Tool $w={34} aria-label="Границы"><Borders /><Arrow /></Tool>
          </ToolRow>
        </ToolRows>
      </GroupBody>
      <Footer name="Абзац" />
    </Group>

    <Group $w={519}>
      <GroupBody>
        <Gallery>
          {styleCards.map((s, i) => (
            <StyleCard key={i} $on={s.on}>
              <Sample $size={s.size} $color={s.color} $serif={s.serif} $italic={s.italic}>АаБбВвГг,</Sample>
              <StyleName>{s.name}</StyleName>
            </StyleCard>
          ))}
          <GalleryScroll>
            <GalleryStep aria-label="Вверх"><svg width="5" height="3"><path d="M0 3h5L2.500 0z" fill="#bbb" /></svg></GalleryStep>
            <GalleryStep aria-label="Вниз"><Arrow /></GalleryStep>
            <GalleryStep aria-label="Все стили"><svg width="7" height="7"><path d="M0 .5h7" stroke="#666" /><path d="M1 3h5L3.500 6z" fill="#666" /></svg></GalleryStep>
          </GalleryScroll>
        </Gallery>
        <BigButton $w={63}>
          <ChangeStyles />
          <BigLabel>Изменить</BigLabel>
          <BigLabel>стили <Arrow /></BigLabel>
        </BigButton>
      </GroupBody>
      <Footer name="Стили" />
    </Group>

    <Group $w={95}>
      <GroupBody>
        <CommandList $pad={8}>
          <Command><CommandIcon><Binoculars /></CommandIcon>Найти&nbsp;<Arrow /></Command>
          <Command><CommandIcon><ReplaceIcon /></CommandIcon>Заменить</Command>
          <Command><CommandIcon><CursorIcon /></CommandIcon>Выделить <Arrow /></Command>
        </CommandList>
      </GroupBody>
      <GroupFooter $tight><GroupName>Редактирование</GroupName></GroupFooter>
    </Group>
  </Ribbon>
);

const DocumentView = () => (
  <Viewport>
    <Sheet $tail />
    <Sheet>
      <Equation>
        <Fraction $lh={18}>
          <Numerator $size={16}><i>N</i><Index $size={11}>0</Index></Numerator>
          <Denominator $size={16}>2<i>πτ</i></Denominator>
        </Fraction>
        <span><i>sinw</i><Index $size={15}>в</Index><i>τ</i></span>
        <span>−</span>
        <span>0</span>
        <span>=</span>
        <Fraction $lh={18}>
          <Numerator $size={16}><i>N</i><Index $size={11}>0</Index><i>w</i><Index $size={11}>в</Index></Numerator>
          <Denominator $size={16}>2<i>π</i></Denominator>
        </Fraction>
        <span>·</span>
        <Fraction $lh={18}>
          <Numerator $size={16}><i>sinw</i><Index $size={11}>в</Index><i>τ</i></Numerator>
          <Denominator $size={16}><i>w</i><Index $size={11}>в</Index><i>τ</i></Denominator>
        </Fraction>
      </Equation>
      <Figure>
        <Plot />
        <Mark $x={241} $y={9} $size={22}>B( τ)</Mark>
        <Mark $x={300} $y={24}>
          <Fraction $lh={20}>
            <Numerator $size={18}><i>N</i><Index $size={13}>0</Index><i>w</i><Index $size={13}>в</Index></Numerator>
            <Denominator $size={18}>2<i>π</i></Denominator>
          </Fraction>
        </Mark>
        <Mark $x={31} $y={177}><OverW top="3π" minus /></Mark>
        <Mark $x={102} $y={177}>−<OverW top="2π" /></Mark>
        <Mark $x={212} $y={167}>−<OverW top="π" /></Mark>
        <Mark $x={286} $y={177}><OverW top="π" /></Mark>
        <Mark $x={383} $y={182}><OverW top="2π" /></Mark>
        <Mark $x={436} $y={177}><OverW top="3π" /></Mark>
        <Mark $x={516} $y={170}><i>τ</i></Mark>
      </Figure>
      <FigureTitle>Рис. 5. График корреляционной функции   <i>B<Index $size={11}>A</Index>(τ)</i></FigureTitle>
      <BodyText>
        По форме графика B<Index $size={11}>A</Index>(t) видно, что сообщение A(t) является эргодическим случайным процессом, так как
        M&#123;A(t)&#125;=0, B(τ)→0
      </BodyText>
    </Sheet>
  </Viewport>
);

const ScrollBar = () => (
  <ScrollColumn>
    <ScrollButton $h={6} aria-label="Разделить"><svg width="9" height="2"><rect width="9" height="2" fill="#7d838b" /></svg></ScrollButton>
    <ScrollButton $h={17} $framed aria-label="Линейка">
      <svg width="13" height="12" viewBox="0 0 13 12" fill="#f6f6f6" stroke="#666"><rect x=".5" y="2.500" width="11" height="7" /><path d="M1.500.5h4v3l-2 2M5 5l3 2 2-2M7 9.500h3v2H7z" /></svg>
    </ScrollButton>
    <ScrollButton $h={17} aria-label="Вверх"><svg width="9" height="5"><path d="M0 5h9L4.500 0z" fill="#4a4d51" /></svg></ScrollButton>
    <Track>
      <Thumb><svg width="8" height="7"><path d="M0 .5h8M0 2.500h8M0 4.500h8M0 6.500h8" stroke="#7c828a" /></svg></Thumb>
    </Track>
    <ScrollButton $h={16} aria-label="Вниз"><svg width="9" height="5"><path d="M0 0h9L4.500 5z" fill="#4a4d51" /></svg></ScrollButton>
    <ScrollButton $h={17} $ruled aria-label="Предыдущая страница"><svg width="5" height="7"><path d="M0 3h5L2.500 0zM0 6h5L2.500 3zM0 6h5v1H0z" fill="#4a4d51" /></svg></ScrollButton>
    <ScrollButton $h={17} aria-label="Выбор объекта"><svg width="8" height="8"><circle cx="4" cy="4" r="3" fill="#d5d8dc" stroke="#666" /></svg></ScrollButton>
    <ScrollButton $h={18} aria-label="Следующая страница"><svg width="5" height="7"><path d="M0 1h5L2.500 4zM0 4h5L2.500 7zM0 0h5v1H0z" fill="#4a4d51" /></svg></ScrollButton>
  </ScrollColumn>
);

const Sign = ({ plus }: { plus?: boolean }) => (
  <svg width="16" height="16" viewBox="0 0 16 16">
    <circle cx="8" cy="8" r="7.400" fill="#f4f5f7" stroke="#6f757d" />
    <path d={plus ? 'M4 8h8M8 4v8' : 'M4 8h8'} stroke="#555" strokeWidth="2" />
  </svg>
);

const Status = () => (
  <StatusBar>
    <StatusItem $w={112}>Страница: 8 из 31</StatusItem>
    <StatusItem $w={111}>Число слов: 1 918</StatusItem>
    <StatusGroup>
      <svg width="17" height="16" viewBox="0 0 17 16">
        <path d="M0 10l7-5 9 4-7 6z" fill="#3d62b5" /><path d="M1 8l6-4 4 4-4 5z" fill="#fff" stroke="#7a8fb8" strokeWidth=".7" /><path d="M7 4l8 3-7 6z" fill="#dfe6f3" />
        <path d="M8 1l7 8M15.500 1L8 9" stroke="#e8412c" strokeWidth="2" />
      </svg>
      <button>английский (США)</button>
    </StatusGroup>
    <StatusRight>
      <ViewButton $on aria-label="Разметка страницы"><svg width="12" height="11"><rect x=".5" y=".5" width="11" height="10" fill="#fff" stroke="#555" /><path d="M2 2.500h8M2 4.500h8M2 6.500h8M2 8.500h8" stroke="#888" /></svg></ViewButton>
      <ViewButton aria-label="Режим чтения"><svg width="12" height="11"><path d="M.5 1.500L6 2.500l5.500-1v7L6 10 .5 8.500zM6 2v8" fill="#f4f4f4" stroke="#666" /><path d="M2 4h2.500M2 6h2.500M7.500 4H10M7.500 6H10" stroke="#888" /></svg></ViewButton>
      <ViewButton aria-label="Веб-документ"><svg width="13" height="12"><rect x=".5" y=".5" width="9" height="8" fill="#fff" stroke="#777" /><path d="M2 2.500h6M2 4.500h6M2 6.500h6" stroke="#999" /><circle cx="9" cy="8" r="3.500" fill="#3f72b8" /><path d="M8 6l2 1-1 3z" fill="#5db36a" /></svg></ViewButton>
      <ViewButton aria-label="Структура"><svg width="10" height="10"><path d="M0 .5h5M3 3h6M5 5.500h5M3 9h6" stroke="#777" /></svg></ViewButton>
      <ViewButton aria-label="Черновик"><svg width="10" height="10"><path d="M0 .5h10M0 3.500h10M0 6.500h10M0 9.500h10" stroke="#777" strokeWidth="1.300" /></svg></ViewButton>
      <ZoomValue>90%</ZoomValue>
      <RoundButton aria-label="Уменьшить масштаб"><Sign /></RoundButton>
      <ZoomSlider type="range" min={0} max={100} defaultValue={45} aria-label="Масштаб" />
      <RoundButton aria-label="Увеличить масштаб"><Sign plus /></RoundButton>
    </StatusRight>
  </StatusBar>
);

const Tasks = () => (
  <TaskBar>
    <TaskButton aria-label="Пуск"><svg width="16" height="16" viewBox="0 0 16 16" fill="#fff"><path d="M0 2.300l6.500-.9v6.100H0zM7.500 1.200L16 0v7.500H7.500zM0 8.500h6.500v6.100L0 13.700zM7.500 8.500H16V16l-8.500-1.200z" /></svg></TaskButton>
    <TaskButton aria-label="Поиск"><svg width="17" height="17" viewBox="0 0 17 17" fill="none" stroke="#fff" strokeWidth="1.300"><circle cx="10.500" cy="6.500" r="5.500" /><path d="M6.500 10.500L.7 16.300" /></svg></TaskButton>
    <TaskButton aria-label="Представление задач"><svg width="17" height="16" viewBox="0 0 17 16" fill="none" stroke="#fff" strokeWidth="1.200"><path d="M.6 0v2.500h10V0M.6 16v-2.500h10V16M14.500 0v16" /><rect x=".6" y="5" width="10" height="6" /><rect x="13" y="4.500" width="3" height="3" fill="#fff" stroke="none" /></svg></TaskButton>
    <TaskButton $running aria-label="Проводник">
      <svg width="22" height="18" viewBox="0 0 22 18"><path d="M0 1h8l2 2h11v14H0z" fill="#f3c64f" /><rect x="0" y="4" width="22" height="13" rx="1" fill="#ffe596" /><path d="M4 18V11.500L5.500 10h11L18 11.500V18h-3.500v-4h-7v4z" fill="#42aee3" /></svg>
    </TaskButton>
    <TaskButton $running aria-label="Chrome">
      <svg width="22" height="22" viewBox="0 0 22 22">
        <circle cx="11" cy="11" r="11" fill="#fbc93a" />
        <path d="M11 11L1.500 5.500A11 11 0 0 1 20.500 5.500H11z" fill="#db4437" />
        <path d="M1.500 5.500A11 11 0 0 0 11 22l4.800-8.300L11 11l-4.800 2.700z" fill="#189d58" />
        <path d="M11 11l9.500-5.500A11 11 0 0 1 11 22l4.800-8.300z" fill="#fbc93a" />
        <circle cx="11" cy="11" r="5.200" fill="#fff" /><circle cx="11" cy="11" r="4.100" fill="#4285f4" />
      </svg>
    </TaskButton>
    <TaskButton $running $active aria-label="Word"><WordLogo size={21} /></TaskButton>
    <Tray>
      <TrayItem $w={44} aria-label="Люди"><svg width="15" height="16" viewBox="0 0 15 16" fill="none" stroke="#fff" strokeWidth="1.200"><circle cx="10.500" cy="3.500" r="2.700" /><circle cx="5" cy="8" r="2.300" /><path d="M.8 15.500c0-6.500 8.400-6.500 8.400 0M8.500 8c3-2.500 6-1 6 3" /></svg></TrayItem>
      <TrayItem $w={28} aria-label="Скрытые значки"><svg width="12" height="7" fill="none" stroke="#fff" strokeWidth="1.400"><path d="M.5 6.500L6 1l5.500 5.500" /></svg></TrayItem>
      <TrayItem $w={23} aria-label="Батарея"><svg width="15" height="13" viewBox="0 0 15 13"><rect x=".6" y="2.600" width="12" height="7" fill="none" stroke="#fff" strokeWidth="1.200" /><path d="M14 4.500v3" stroke="#fff" /><circle cx="10.500" cy="8.500" r="4.500" fill="#13a038" /><path d="M10.500 6v5M9 8l1.500-2L12 8" stroke="#fff" fill="none" /></svg></TrayItem>
      <TrayItem $w={24} aria-label="Сеть"><svg width="12" height="12" viewBox="0 0 12 12" fill="none" stroke="#ddd" strokeWidth="1.100"><path d="M.6 12C.6 5.500 5.500.6 12 .6M3.600 12c0-5 3.400-8.400 8.400-8.400M6.600 12c0-3.300 2.100-5.400 5.400-5.400" /><circle cx="10.500" cy="10.500" r="1" fill="#fff" /></svg></TrayItem>
      <TrayItem $w={24} aria-label="Звук"><svg width="14" height="12" viewBox="0 0 14 12" fill="none" stroke="#fff" strokeWidth="1.100"><path d="M.6 4h2L6 .8v10.400L2.600 8h-2zM9 4l4.500 4.500M13.500 4L9 8.500" /></svg></TrayItem>
      <TrayItem $w={36}>РУС</TrayItem>
      <Clock>17:20<br />31.03.2019</Clock>
      <TrayItem $w={46} aria-label="Уведомления">
        <svg width="25" height="24" viewBox="0 0 25 24"><path d="M1 1h16v12H8l-3 3v-3H1z" fill="#fff" /><path d="M4 4.500h10M4 7.500h10M4 10.500h6" stroke="#222" /><circle cx="16.500" cy="15.500" r="7.500" fill="#333" stroke="#888" /><text x="13.500" y="20" fontFamily="Open Sans" fontSize="12" fill="#fff">1</text></svg>
      </TrayItem>
      <ShowDesktop aria-label="Свернуть все окна" />
    </Tray>
  </TaskBar>
);

export default function App() {
  return (
    <Shell>
      <GlobalStyle />
      <TitleBar>
        <QuickAccess>
          <QuickButton aria-label="Word"><WordLogo size={16} /></QuickButton>
          <QuickRule />
          <QuickButton aria-label="Сохранить" $w={20}><SaveIcon /></QuickButton>
          <QuickButton aria-label="Отменить" $w={16}><UndoIcon /></QuickButton>
          <QuickButton aria-label="Список отмены" $w={7}><Arrow color="#222" /></QuickButton>
          <QuickButton aria-label="Повторить" $w={20}><RedoIcon /></QuickButton>
          <QuickRule />
          <QuickButton aria-label="Настройка" $w={5}><svg width="5" height="6"><path d="M0 .5h5" stroke="#222" /><path d="M0 3h5L2.500 6z" fill="#222" /></svg></QuickButton>
        </QuickAccess>
        <Caption>ОТС КУРСАЧ  -  Microsoft Word (Сбой активации продукта)</Caption>
        <WindowButtons>
          <WindowButton aria-label="Свернуть"><svg width="10" height="10"><path d="M0 5.500h10" stroke="#111" /></svg></WindowButton>
          <WindowButton aria-label="Восстановить"><svg width="10" height="10" fill="none" stroke="#111"><path d="M.5 2.500h7v7h-7zM2.500 2.500v-2h7v7h-2" /></svg></WindowButton>
          <WindowButton aria-label="Закрыть"><svg width="11" height="11"><path d="M.5.5l10 10M10.500.5l-10 10" stroke="#111" strokeWidth="1.100" /></svg></WindowButton>
        </WindowButtons>
      </TitleBar>
      <TabRow>
        <FileTab>Файл</FileTab>
        {tabs.map((t, i) => <Tab key={t.name} $w={t.w} $active={i === 0}>{t.name}</Tab>)}
        <TabTools>
          <button aria-label="Свернуть ленту"><svg width="9" height="7" fill="#fff" stroke="#555"><path d="M.7 4L4.500.7 8.300 4v2.300L4.500 3.500.7 6.300z" /></svg></button>
          <button aria-label="Справка"><svg width="16" height="16"><circle cx="8" cy="8" r="7.500" fill="#4179c9" stroke="#2c5ca6" /><text x="8" y="13" textAnchor="middle" fontFamily="Open Sans" fontWeight="700" fontSize="13" fill="#fff">?</text></svg></button>
        </TabTools>
      </TabRow>
      <RibbonBar />
      <Workspace>
        <TabSelectorCell><TabSelector aria-label="Позиция табуляции"><svg width="15" height="15"><rect x=".5" y=".5" width="14" height="14" fill="#fff" stroke="#868c94" /><path d="M6 6v4h5" fill="none" stroke="#333" strokeWidth="2" /></svg></TabSelector></TabSelectorCell>
        <RulerCell><HorizontalRuler /></RulerCell>
        <SideRuler><VerticalRuler /></SideRuler>
        <DocumentView />
        <ScrollBar />
      </Workspace>
      <Status />
      <Tasks />
    </Shell>
  );
}
